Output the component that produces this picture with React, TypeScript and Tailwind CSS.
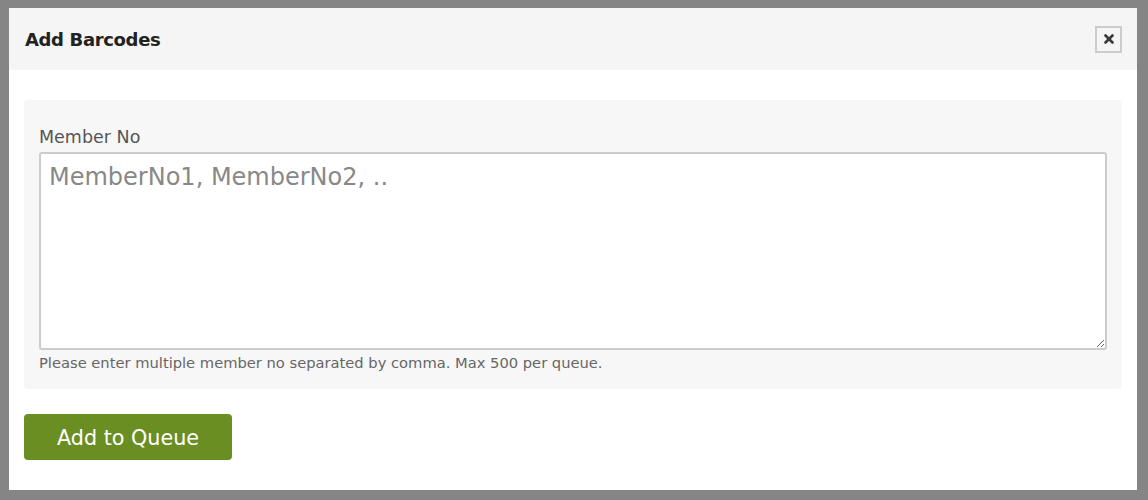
import { X } from 'lucide-react';

export default function App() {
  return (
    <div className="w-[1148px] h-[500px] bg-[#858585] pt-[8px] pl-[9px] font-['DejaVu_Sans',Verdana,sans-serif]">
      <div className="w-[1128px] h-[482px] bg-white flex flex-col">
        <div className="h-[62px] bg-[#f5f5f5] flex items-center justify-between pl-[16px] pr-[15px]">
          <h4 className="text-[18px] font-bold text-[#222] tracking-[-0.35px]">Add Barcodes</h4>
          <button className="w-[27px] h-[27px] border-2 border-[#cccccc] flex items-center justify-center text-[#3a3a3a]">
            <X size={14} strokeWidth={4.5} />
          </button>
        </div>

        <div className="px-[15px] pt-[30px]">
          <div className="bg-[#f7f7f7] rounded-[4px] px-[15px] pt-[26px] h-[289px]">
            <label className="block text-[17.5px] text-[#555] leading-[22px] mb-[4px]">Member No</label>
            <textarea
              className="block w-full h-[198px] bg-white border-2 border-[#cccccc] rounded-[3px] px-[8px] py-[5px] text-[24px] text-[#555] placeholder:text-[#888] outline-none"
              placeholder="MemberNo1, MemberNo2, .."
            />
            <p className="text-[14.7px] text-[#666] mt-[3px] leading-[20px]">
              Please enter multiple member no separated by comma. Max 500 per queue.
            </p>
          </div>

          <button className="mt-[25px] w-[208px] h-[46px] pt-[3px] bg-[#6b8e23] rounded-[4px] text-white text-[20.7px]">
            Add to Queue
          </button>
        </div>
      </div>
    </div>
  );
}
